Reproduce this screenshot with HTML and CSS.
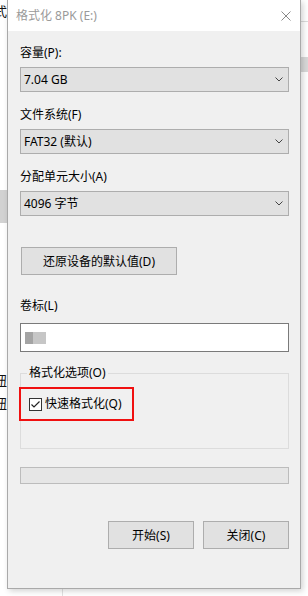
FILE: index.html
```html
<!DOCTYPE html>
<html>

<head>
    <title>格式化 8PK (E:)</title>
    <link rel="stylesheet" href="styles.css">
</head>

<body>
    <div class="desk">
        <!-- bits of the window behind -->
        <span class="behind-glyph glyph-top">式</span>
        <div class="behind-tab"></div>
        <span class="behind-glyph glyph-a">钮</span>
        <span class="behind-glyph glyph-b">钮</span>
        <div class="behind-line"></div>
        <div class="behind-block"></div>
        <div class="behind-vline"></div>

        <div class="dialog">
            <div class="titlebar">
                <span class="title">格式化 8PK (E:)</span>
                <svg class="close" width="10" height="10" viewBox="0 0 10 10">
                    <path d="M0.5 0.5 L9.5 9.5 M9.5 0.5 L0.5 9.5" stroke="#8a8a8a" stroke-width="1" fill="none" />
                </svg>
            </div>

            <div class="content">
                <div class="field">
                    <div class="label">容量(P):</div>
                    <div class="combo">
                        <span>7.04 GB</span>
                        <svg width="8" height="5" viewBox="0 0 8 5">
                            <polyline points="0.5,0.5 4,4 7.5,0.5" stroke="#444" stroke-width="1" fill="none" />
                        </svg>
                    </div>
                </div>

                <div class="field">
                    <div class="label">文件系统(F)</div>
                    <div class="combo">
                        <span>FAT32 (默认)</span>
                        <svg width="8" height="5" viewBox="0 0 8 5">
                            <polyline points="0.5,0.5 4,4 7.5,0.5" stroke="#444" stroke-width="1" fill="none" />
                        </svg>
                    </div>
                </div>

                <div class="field">
                    <div class="label">分配单元大小(A)</div>
                    <div class="combo">
                        <span>4096 字节</span>
                        <svg width="8" height="5" viewBox="0 0 8 5">
                            <polyline points="0.5,0.5 4,4 7.5,0.5" stroke="#444" stroke-width="1" fill="none" />
                        </svg>
                    </div>
                </div>

                <button class="btn restore">还原设备的默认值(D)</button>

                <div class="label volume-label">卷标(L)</div>
                <div class="textbox"><span class="blurred"></span></div>

                <fieldset class="options">
                    <legend>格式化选项(O)</legend>
                    <div class="highlight">
                        <span class="checkbox">
                            <svg width="11" height="11" viewBox="0 0 11 11">
                                <path d="M1.5 5.5 L4 8 L9.5 2.5" stroke="#222" stroke-width="1.2" fill="none" />
                            </svg>
                        </span>
                        <span>快速格式化(Q)</span>
                    </div>
                </fieldset>

                <div class="progress"></div>

                <div class="actions">
                    <button class="btn action">开始(S)</button>
                    <button class="btn action">关闭(C)</button>
                </div>
            </div>
        </div>
    </div>
</body>

</html>
```

FILE: styles.css
```css
body {
    margin: 0;
    background-color: #fff;
    font-family: "Noto Sans", "Noto Sans CJK SC", sans-serif;
    font-size: 12px;
    line-height: 16px;
    color: #000;
    overflow: hidden;
}

.desk {
    position: relative;
    width: 308px;
    height: 596px;
}

/* pieces of the window underneath */
.behind-glyph {
    position: absolute;
    left: -6px;
    font-size: 13px;
    line-height: 14px;
    color: #111;
}

.glyph-top {
    top: 4px;
}

.glyph-a {
    top: 373px;
}

.glyph-b {
    top: 396px;
}

.behind-tab {
    position: absolute;
    left: 0;
    top: 190px;
    width: 7px;
    height: 33px;
    background-color: #d2d2d2;
}

.behind-line {
    position: absolute;
    left: 300px;
    top: 21px;
    width: 8px;
    height: 1px;
    background-color: #dcdcdc;
}

.behind-block {
    position: absolute;
    left: 300px;
    top: 57px;
    width: 8px;
    height: 15px;
    background-color: #d9d9d9;
}

.behind-vline {
    position: absolute;
    left: 62px;
    top: 589px;
    width: 1px;
    height: 7px;
    background-color: #e2e2e2;
}

/* Dialog window */
.dialog {
    position: relative;
    margin-left: 7px;
    width: 294px;
    height: 589px;
    box-sizing: border-box;
    background-color: #f0f0f0;
    border: 1px solid #a9a9a9;
    border-top: none;
    box-shadow: 2px 2px 6px rgba(0, 0, 0, 0.18);
}

.titlebar {
    height: 31px;
    background-color: #fff;
    display: flex;
    align-items: center;
    justify-content: space-between;
    padding: 0 8px 0 8px;
}

.title {
    color: #9a9a9a;
}

.close {
    margin-right: 1px;
}

.content {
    padding: 14px 11px 0 12px;
}

.field {
    margin-bottom: 15px;
}

.label {
    margin-bottom: 6px;
}

.combo {
    height: 25px;
    box-sizing: border-box;
    border: 1px solid #adadad;
    background-color: #e1e1e1;
    display: flex;
    align-items: center;
    justify-content: space-between;
    padding: 0 5px 0 3px;
}

.btn {
    font-family: "Noto Sans", "Noto Sans CJK SC", sans-serif;
    font-size: 12px;
    color: #000;
    background-color: #e1e1e1;
    border: 1px solid #adadad;
    height: 28px;
    padding: 0;
    box-sizing: border-box;
}

.restore {
    display: block;
    margin: 31px 0 0 1px;
    width: 156px;
}

.volume-label {
    margin-top: 23px;
    margin-bottom: 9px;
}

.textbox {
    height: 29px;
    box-sizing: border-box;
    border: 1px solid #7a7a7a;
    background-color: #fff;
    display: flex;
    align-items: center;
    padding-left: 4px;
}

.blurred {
    display: inline-block;
    width: 21px;
    height: 12px;
    background: linear-gradient(to right, #a4a4a4 0, #a4a4a4 40%, #c6c6c6 40%, #c6c6c6 100%);
    filter: blur(0.6px);
}

/* Group box */
.options {
    margin: 14px 0 0 0;
    padding: 0 0 27px 0;
    border: 1px solid #dcdcdc;
    min-width: 0;
}

.options legend {
    margin-left: 6px;
    padding: 0 2px;
    line-height: 14px;
}

.highlight {
    margin: 7px 0 0 -2px;
    width: 115px;
    height: 34px;
    box-sizing: border-box;
    border: 2px solid #f01010;
    display: flex;
    align-items: center;
    padding-left: 8px;
    gap: 3px;
}

.checkbox {
    width: 13px;
    height: 13px;
    box-sizing: border-box;
    border: 1px solid #333;
    background-color: #fff;
    display: flex;
    align-items: center;
    justify-content: center;
}

.progress {
    margin-top: 18px;
    height: 17px;
    box-sizing: border-box;
    border: 1px solid #bcbcbc;
    background-color: #e6e6e6;
}

.actions {
    margin-top: 37px;
    display: flex;
    justify-content: flex-end;
    gap: 9px;
}

.action {
    width: 86px;
}
```
